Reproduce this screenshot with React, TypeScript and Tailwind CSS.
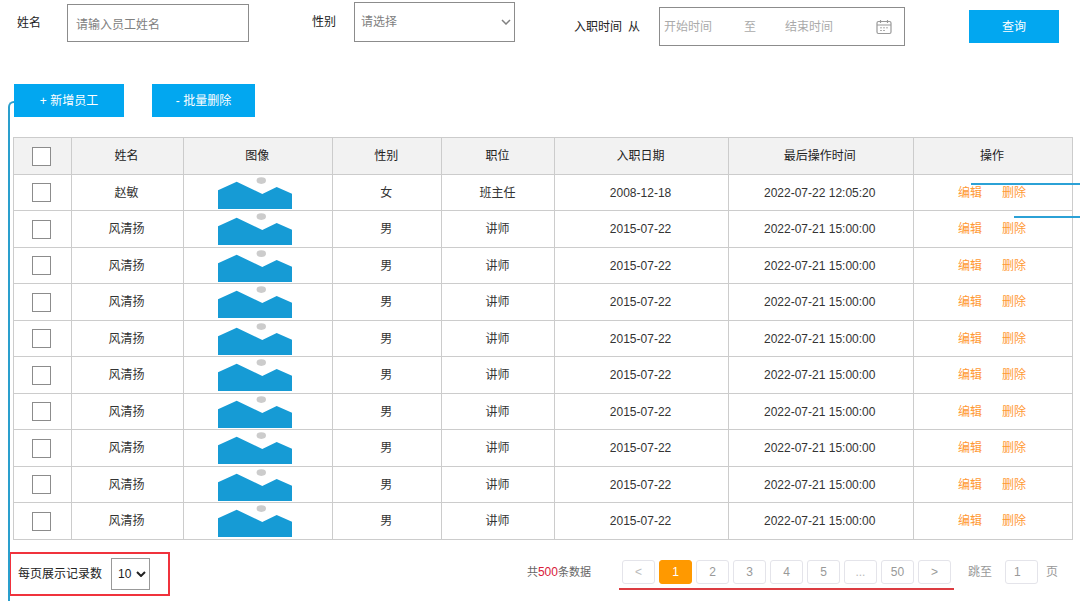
type Employee = {
    id: number;
    name: string;
    gender: string;
    position: string;
    entryDate: string;
    updatedAt: string;
};

type PageItem = {
    label: string;
    title: string;
    tone: string;
};

const employees: Employee[] = [
    {
        id: 1,
        name: '赵敏',
        gender: '女',
        position: '班主任',
        entryDate: '2008-12-18',
        updatedAt: '2022-07-22 12:05:20',
    },
    ...Array.from({ length: 9 }, (_, i) => ({
        id: i + 2,
        name: '风清扬',
        gender: '男',
        position: '讲师',
        entryDate: '2015-07-22',
        updatedAt: '2022-07-21 15:00:00',
    })),
];

const columns = [
    { title: '姓名', width: 'w-[112px]' },
    { title: '图像', width: 'w-[149px]' },
    { title: '性别', width: 'w-[109px]' },
    { title: '职位', width: 'w-[113px]' },
    { title: '入职日期', width: 'w-[173px]' },
    { title: '最后操作时间', width: 'w-[185px]' },
    { title: '操作', width: 'w-[159px]' },
];

const plain = 'border-[#e4e4ea] bg-white text-[#999]';
const faint = 'border-[#e4e4ea] bg-white text-[#bbb]';
const active = 'border-[#ff9900] bg-[#ff9900] text-white';

const pages: PageItem[] = [
    { label: '<', title: '上一页', tone: faint },
    { label: '1', title: '第1页', tone: active },
    { label: '2', title: '第2页', tone: plain },
    { label: '3', title: '第3页', tone: plain },
    { label: '4', title: '第4页', tone: plain },
    { label: '5', title: '第5页', tone: plain },
    { label: '...', title: '更多', tone: faint },
    { label: '50', title: '第50页', tone: plain },
    { label: '>', title: '下一页', tone: plain },
];

const ChevronIcon = ({ className }: { className: string }) => (
    <svg className={className} viewBox="0 0 10 6" fill="none" stroke="currentColor" aria-hidden="true">
        <path d="M1 1l4 4 4-4" />
    </svg>
);

const CalendarIcon = () => (
    <svg className="size-4 shrink-0 text-[#999]" viewBox="0 0 16 16" fill="none" stroke="currentColor" aria-hidden="true">
        <rect x="1" y="2.5" width="14" height="12" rx="1.5" strokeWidth="1.2" />
        <path d="M1 6h14M4.5 1v3M11.5 1v3" strokeWidth="1.2" />
        <path d="M4 8.8h8M4 11.5h5" strokeDasharray="2 1" strokeWidth="0.8" />
    </svg>
);

const Photo = () => (
    <svg className="mr-1 inline-block h-[34px] w-[74px] align-middle" viewBox="0 0 74 34" role="img" aria-label="图像">
        <polygon points="0,14.3 18.7,5.7 44.3,18 58.7,11 74,17.7 74,33 0,33" fill="#169bd5" />
        <ellipse cx="43.3" cy="4.6" rx="4.7" ry="3.3" fill="#ccc" />
    </svg>
);

const Checkbox = ({ label }: { label: string }) => (
    <input
        type="checkbox"
        aria-label={label}
        className="inline-block size-[19px] appearance-none border border-[#8c8c8c] bg-white align-middle checked:bg-[#02a7f0]"
    />
);

const SearchBar = () => (
    <form className="flex items-start justify-between pr-[21px] pl-[17px]" onSubmit={(e) => e.preventDefault()}>
        <div className="flex items-end gap-[63px] pt-0.5">
            <div className="flex items-center gap-[26px]">
                <label htmlFor="name">姓名</label>
                <input
                    id="name"
                    placeholder="请输入员工姓名"
                    className="h-[38px] w-[182px] border border-[#8c8c8c] pt-1 pl-2 placeholder:text-[#808080]"
                />
            </div>
            <div className="flex items-center gap-[18px]">
                <label htmlFor="gender">性别</label>
                <div className="relative">
                    <select
                        id="gender"
                        className="block h-10 w-[161px] appearance-none border border-[#8c8c8c] bg-white pl-1.5 text-[#808080]"
                    >
                        <option>请选择</option>
                        <option>男</option>
                        <option>女</option>
                    </select>
                    <ChevronIcon className="pointer-events-none absolute top-[17px] right-1 h-[6px] w-[10px] stroke-[1.5] text-[#808080]" />
                </div>
            </div>
        </div>

        <div className="flex items-center gap-16 pt-[7px]">
            <div className="flex items-center gap-[19px]">
                <label htmlFor="start" className="flex gap-[6px]">
                    <span>入职时间</span>
                    <span>从</span>
                </label>
                <div className="flex h-[39px] w-[246px] items-center border border-[#8c8c8c] pr-3 pl-1 text-[#aaa]">
                    <input id="start" placeholder="开始时间" className="w-20 placeholder:text-[#aaa]" />
                    <label htmlFor="end">至</label>
                    <input
                        id="end"
                        placeholder="结束时间"
                        className="ml-[29px] min-w-0 flex-1 placeholder:text-[#aaa]"
                    />
                    <CalendarIcon />
                </div>
            </div>
            <button type="submit" className="h-[33px] w-[90px] bg-[#02a7f0] text-white">
                查询
            </button>
        </div>
    </form>
);

const EmployeeTable = () => (
    <table className="w-full table-fixed border-collapse text-center text-[#333] [&_td]:border [&_td]:border-[#ccc] [&_td]:p-0 [&_td]:pr-0.5 [&_th]:border [&_th]:border-[#ccc] [&_th]:p-0 [&_th]:pr-0.5">
        <thead>
            <tr className="h-[37px] bg-[#f2f2f2]">
                <th className="w-[58px]">
                    <Checkbox label="全选" />
                </th>
                {columns.map((column) => (
                    <th key={column.title} className={`${column.width} font-normal text-[#222]`}>
                        {column.title}
                    </th>
                ))}
            </tr>
        </thead>
        <tbody>
            {employees.map((employee) => (
                <tr key={employee.id} className="odd:h-[36px] even:h-[37px]">
                    <td>
                        <Checkbox label={`选择${employee.name}`} />
                    </td>
                    <td>{employee.name}</td>
                    <td className="leading-[0]">
                        <Photo />
                    </td>
                    <td>{employee.gender}</td>
                    <td>{employee.position}</td>
                    <td>{employee.entryDate}</td>
                    <td>{employee.updatedAt}</td>
                    <td>
                        <div className="flex justify-center gap-5 text-[#ff9933]">
                            <a href="#edit">编辑</a>
                            <a href="#delete">删除</a>
                        </div>
                    </td>
                </tr>
            ))}
        </tbody>
    </table>
);

const Footer = () => (
    <div className="mt-3 flex items-start justify-between pr-[22px] pl-[9px]">
        <div className="flex h-11 w-[161px] items-center gap-[9px] border-2 border-[#f0323c] pl-[7px]">
            <label htmlFor="pageSize">每页展示记录数</label>
            <div className="relative">
                <select
                    id="pageSize"
                    className="block h-8 w-[39px] appearance-none border border-[#999] bg-white pl-1.5"
                >
                    <option>10</option>
                    <option>20</option>
                    <option>50</option>
                </select>
                <ChevronIcon className="pointer-events-none absolute top-[13px] right-1 h-[6px] w-[10px] stroke-2 text-[#222]" />
            </div>
        </div>

        <div className="flex items-start pt-2 leading-6 text-[#999]">
            <p className="mr-7 text-[11px] leading-6 text-[#666]">
                共<span className="text-xs leading-6 text-[#d9203a]">500</span>条数据
            </p>
            <nav aria-label="分页" className="flex gap-1 border-b-2 border-[#dc3c41] px-[3px] pb-1">
                {pages.map((page) => (
                    <button
                        key={page.title}
                        type="button"
                        aria-label={page.title}
                        className={`flex h-6 w-[33px] items-center justify-center rounded-[3px] border ${page.tone}`}
                    >
                        {page.label}
                    </button>
                ))}
            </nav>
            <label htmlFor="jump" className="ml-[14px]">
                跳至
            </label>
            <input
                id="jump"
                defaultValue="1"
                className="mr-2 ml-[13px] h-6 w-[33px] rounded-[3px] border border-[#e4e4ea] pl-2"
            />
            <span>页</span>
        </div>
    </div>
);

export default function App() {
    return (
        <div className="relative min-h-screen overflow-hidden bg-white font-['Liberation_Sans','Noto_Sans_CJK_SC',sans-serif] text-xs text-[#222]">
            {/* callout lines that lead out to the notes beside the page */}
            <div className="absolute top-[101px] bottom-0 left-2 w-3 rounded-tl-md border-t-2 border-l-2 border-[#2a9fcd]" />
            <div className="absolute top-[183px] right-0 h-0.5 w-[109px] bg-[#2ba1d6]" />
            <div className="absolute top-[216px] right-0 h-0.5 w-[66px] bg-[#2ba1d6]" />

            <SearchBar />

            <div className="relative mt-[38px] flex gap-7 pl-[14px] text-white">
                <button type="button" className="h-[33px] w-[110px] bg-[#02a7f0]">
                    + 新增员工
                </button>
                <button type="button" className="h-[33px] w-[103px] bg-[#02a7f0]">
                    - 批量删除
                </button>
            </div>

            <div className="mt-5 pr-[7px] pl-[13px]">
                <EmployeeTable />
            </div>

            <Footer />
        </div>
    );
}
